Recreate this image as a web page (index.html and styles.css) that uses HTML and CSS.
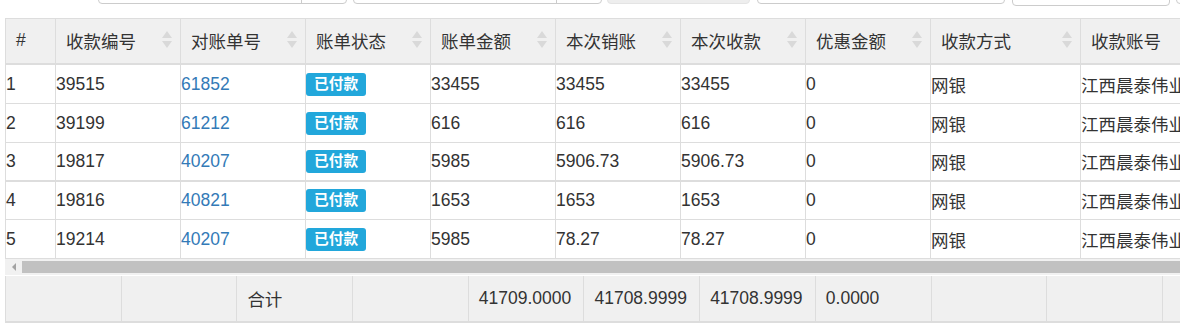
FILE: index.html
```html
<!DOCTYPE html>
<html lang="zh-CN">
<head>
<meta charset="utf-8">
<title>收款记录</title>
<link rel="stylesheet" href="styles.css">
</head>
<body>
<div class="toolbar">
  <div class="tool-row">
    <div class="field f1"><span class="addon"></span></div>
    <div class="field f2"><span class="addon"></span></div>
    <div class="field f3"></div>
    <div class="field f4"></div>
    <div class="field f5"></div>
    <div class="field f6"></div>
  </div>
</div>

<div class="grid">
  <table class="data">
    <colgroup>
      <col class="c-idx">
      <col class="c-std"><col class="c-std"><col class="c-std"><col class="c-std">
      <col class="c-std"><col class="c-std"><col class="c-std">
      <col class="c-wide"><col class="c-wide">
    </colgroup>
    <thead>
      <tr>
        <th><div class="th-in">#</div></th>
        <th><div class="th-in"><span>收款编号</span><svg class="sort" viewBox="0 0 10 18"><polygon points="0,7 5,0 10,7"/><polygon points="0,10 5,17 10,10"/></svg></div></th>
        <th><div class="th-in"><span>对账单号</span><svg class="sort" viewBox="0 0 10 18"><polygon points="0,7 5,0 10,7"/><polygon points="0,10 5,17 10,10"/></svg></div></th>
        <th><div class="th-in"><span>账单状态</span><svg class="sort" viewBox="0 0 10 18"><polygon points="0,7 5,0 10,7"/><polygon points="0,10 5,17 10,10"/></svg></div></th>
        <th><div class="th-in"><span>账单金额</span><svg class="sort" viewBox="0 0 10 18"><polygon points="0,7 5,0 10,7"/><polygon points="0,10 5,17 10,10"/></svg></div></th>
        <th><div class="th-in"><span>本次销账</span><svg class="sort" viewBox="0 0 10 18"><polygon points="0,7 5,0 10,7"/><polygon points="0,10 5,17 10,10"/></svg></div></th>
        <th><div class="th-in"><span>本次收款</span><svg class="sort" viewBox="0 0 10 18"><polygon points="0,7 5,0 10,7"/><polygon points="0,10 5,17 10,10"/></svg></div></th>
        <th><div class="th-in"><span>优惠金额</span><svg class="sort" viewBox="0 0 10 18"><polygon points="0,7 5,0 10,7"/><polygon points="0,10 5,17 10,10"/></svg></div></th>
        <th><div class="th-in"><span>收款方式</span><svg class="sort" viewBox="0 0 10 18"><polygon points="0,7 5,0 10,7"/><polygon points="0,10 5,17 10,10"/></svg></div></th>
        <th><div class="th-in"><span>收款账号</span><svg class="sort" viewBox="0 0 10 18"><polygon points="0,7 5,0 10,7"/><polygon points="0,10 5,17 10,10"/></svg></div></th>
      </tr>
    </thead>
    <tbody>
      <tr>
        <td>1</td><td>39515</td><td><a href="#">61852</a></td><td><span class="badge">已付款</span></td>
        <td>33455</td><td>33455</td><td>33455</td><td>0</td><td>网银</td><td>江西晨泰伟业</td>
      </tr>
      <tr>
        <td>2</td><td>39199</td><td><a href="#">61212</a></td><td><span class="badge">已付款</span></td>
        <td>616</td><td>616</td><td>616</td><td>0</td><td>网银</td><td>江西晨泰伟业</td>
      </tr>
      <tr class="row-sep">
        <td>3</td><td>19817</td><td><a href="#">40207</a></td><td><span class="badge">已付款</span></td>
        <td>5985</td><td>5906.73</td><td>5906.73</td><td>0</td><td>网银</td><td>江西晨泰伟业</td>
      </tr>
      <tr class="row-short">
        <td>4</td><td>19816</td><td><a href="#">40821</a></td><td><span class="badge">已付款</span></td>
        <td>1653</td><td>1653</td><td>1653</td><td>0</td><td>网银</td><td>江西晨泰伟业</td>
      </tr>
      <tr>
        <td>5</td><td>19214</td><td><a href="#">40207</a></td><td><span class="badge">已付款</span></td>
        <td>5985</td><td>78.27</td><td>78.27</td><td>0</td><td>网银</td><td>江西晨泰伟业</td>
      </tr>
    </tbody>
  </table>

  <div class="hscroll"><span class="arrow"></span><div class="thumb"></div></div>

  <div class="foot">
    <div class="foot-cell"></div>
    <div class="foot-cell"></div>
    <div class="foot-cell">合计</div>
    <div class="foot-cell"></div>
    <div class="foot-cell">41709.0000</div>
    <div class="foot-cell">41708.9999</div>
    <div class="foot-cell">41708.9999</div>
    <div class="foot-cell">0.0000</div>
    <div class="foot-cell"></div>
    <div class="foot-cell"></div>
    <div class="foot-cell"></div>
    <div class="foot-cell"></div>
  </div>
</div>
</body>
</html>
```

FILE: styles.css
```css
html, body {
  margin: 0;
  padding: 0;
  background: #fff;
}

body {
  font-family: "Liberation Sans", "Noto Sans CJK SC", sans-serif;
  font-size: 17.5px;
  color: #333;
  overflow: hidden;
}

/* cut-off form controls above the grid */
.toolbar {
  height: 18px;
  overflow: hidden;
}

.tool-row {
  display: flex;
  align-items: flex-start;
  margin-top: -28px;
  padding-left: 98px;
}

.field {
  box-sizing: border-box;
  height: 32px;
  border: 1px solid #cccccc;
  border-radius: 4px;
  display: flex;
  justify-content: flex-end;
  flex: 0 0 auto;
}

.addon {
  width: 44px;
  border-left: 1px solid #cccccc;
}

.f1 { width: 249px; margin-right: 6px; }
.f2 { width: 249px; margin-right: 5px; }
.f3 { width: 143px; margin-right: 7px; background: #eeeeee; border-color: #e4e4e4; }
.f4 { width: 248px; margin-right: 7px; }
.f5 { width: 158px; margin-right: 6px; height: 34px; }
.f6 { width: 60px; }

/* grid */
.grid {
  margin-left: 5px;
  overflow: hidden;
}

.data {
  border-collapse: separate;
  border-spacing: 0;
  table-layout: fixed;
  width: 1226px;
  border-top: 1px solid #dddddd;
  border-left: 1px solid #dddddd;
}

.c-idx { width: 50px; }
.c-std { width: 125px; }
.c-wide { width: 150px; }

.data th,
.data td {
  box-sizing: border-box;
  padding: 0;
}

.data th {
  height: 46px;
  background: #f0f0f0;
  border-right: 1px solid #dddddd;
  border-bottom: 2px solid #dddddd;
  font-weight: normal;
  text-align: left;
  color: #333;
  white-space: nowrap;
}

.th-in {
  display: flex;
  align-items: center;
  justify-content: space-between;
  padding: 0 8px 2px 10px;
}

.sort {
  width: 10px;
  height: 18px;
  fill: #d9d9d9;
  flex: 0 0 auto;
}

.data td {
  height: 39px;
  border-right: 1px solid #dddddd;
  border-bottom: 1px solid #dddddd;
  vertical-align: middle;
  white-space: nowrap;
  overflow: hidden;
}

.data tr.row-sep td {
  height: 39px;
  border-bottom-width: 2px;
}

.data tr.row-short td {
  height: 38px;
}

.data a {
  color: #337ab7;
  text-decoration: none;
}

.badge {
  display: inline-block;
  height: 23px;
  line-height: 23px;
  padding: 0 8px;
  background: #22a7db;
  color: #fff;
  font-weight: bold;
  font-size: 14.7px;
  border-radius: 3px;
  vertical-align: middle;
}

/* horizontal scrollbar */
.hscroll {
  height: 16px;
  background: #f1f1f1;
  display: flex;
  align-items: center;
  margin-bottom: 1px;
}

.arrow {
  width: 0;
  height: 0;
  margin-left: 7px;
  border-right: 4px solid #a3a3a3;
  border-top: 4px solid transparent;
  border-bottom: 4px solid transparent;
}

.thumb {
  flex: 1;
  height: 12px;
  margin-left: 6px;
  background: #c1c1c1;
}

/* footer totals */
.foot {
  display: flex;
  width: 1400px;
  height: 45px;
  background: #f0f0f0;
  border-left: 1px solid #dddddd;
  border-bottom: 2px solid #dddddd;
}

.foot-cell {
  flex: 0 0 115.7px;
  box-sizing: border-box;
  border-right: 1px solid #dddddd;
  padding-left: 10px;
  display: flex;
  align-items: center;
  white-space: nowrap;
}
```
